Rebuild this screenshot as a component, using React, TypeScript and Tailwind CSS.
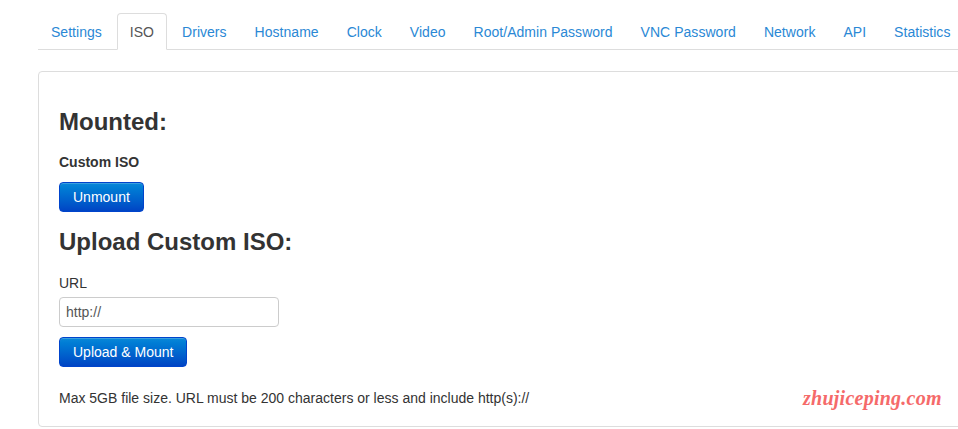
import React from "react";

const tabs = [
  "Settings",
  "ISO",
  "Drivers",
  "Hostname",
  "Clock",
  "Video",
  "Root/Admin Password",
  "VNC Password",
  "Network",
  "API",
  "Statistics",
];

const btn =
  "inline-block h-[30px] px-[13px] rounded-[4px] border border-[#0044cc] bg-gradient-to-b from-[#0a88d8] to-[#0044c4] text-white text-[14px] leading-[28px] shadow-[inset_0_1px_0_rgba(255,255,255,0.2)]";

export default function App() {
  return (
    <div
      className="w-[958px] h-[429px] overflow-hidden bg-white text-[#333] text-[14px]"
      style={{ fontFamily: '"Liberation Sans", Arial, sans-serif' }}
    >
      <div className="w-[1000px] ml-[38px] pt-[13px]">
        <ul className="flex border-b border-[#ddd] h-[37px]">
          {tabs.map((t) => {
            const active = t === "ISO";
            return (
              <li key={t} className="mr-[2px] -mb-px">
                <span
                  className={
                    "block h-[37px] px-[12px] border rounded-t-[4px] leading-[20px] py-[8px] whitespace-nowrap tracking-[0.03px] " +
                    (active
                      ? "border-[#ddd] border-b-white bg-white text-[#555]"
                      : "border-transparent text-[#2a88d5]")
                  }
                >
                  {t}
                </span>
              </li>
            );
          })}
        </ul>
        <div className="relative mt-[21px] h-[356px] border border-[#ddd] rounded-[4px] pl-[20px] pt-[37px]">
          <h3 className="text-[24px] font-bold leading-[26px] text-[#333]">Mounted:</h3>
          <div className="mt-[17px] font-bold leading-[20px]">Custom ISO</div>
          <div className="mt-[10px]">
            <button className={btn}>Unmount</button>
          </div>
          <h3 className="mt-[17px] text-[24px] font-bold leading-[26px] text-[#333]">
            Upload Custom ISO:
          </h3>
          <div className="mt-[18px] leading-[20px]">URL</div>
          <div className="mt-[4px]">
            <input
              readOnly
              value="http://"
              className="w-[220px] h-[30px] border border-[#ccc] rounded-[4px] px-[6px] text-[14px] text-[#555] outline-none"
              style={{ fontFamily: '"Liberation Sans", Arial, sans-serif' }}
            />
          </div>
          <div className="mt-[10px]">
            <button className={btn}>Upload &amp; Mount</button>
          </div>
          <div className="mt-[21px] leading-[20px] text-[#333]">
            Max 5GB file size. URL must be 200 characters or less and include http(s)://
          </div>
          <span
            className="absolute left-[764px] top-[311px] text-[20px] italic font-bold tracking-[0.25px] text-[#f56a6a]"
            style={{ fontFamily: '"Liberation Serif", "DejaVu Serif", serif' }}
          >
            zhujiceping.com
          </span>
        </div>
      </div>
    </div>
  );
}
